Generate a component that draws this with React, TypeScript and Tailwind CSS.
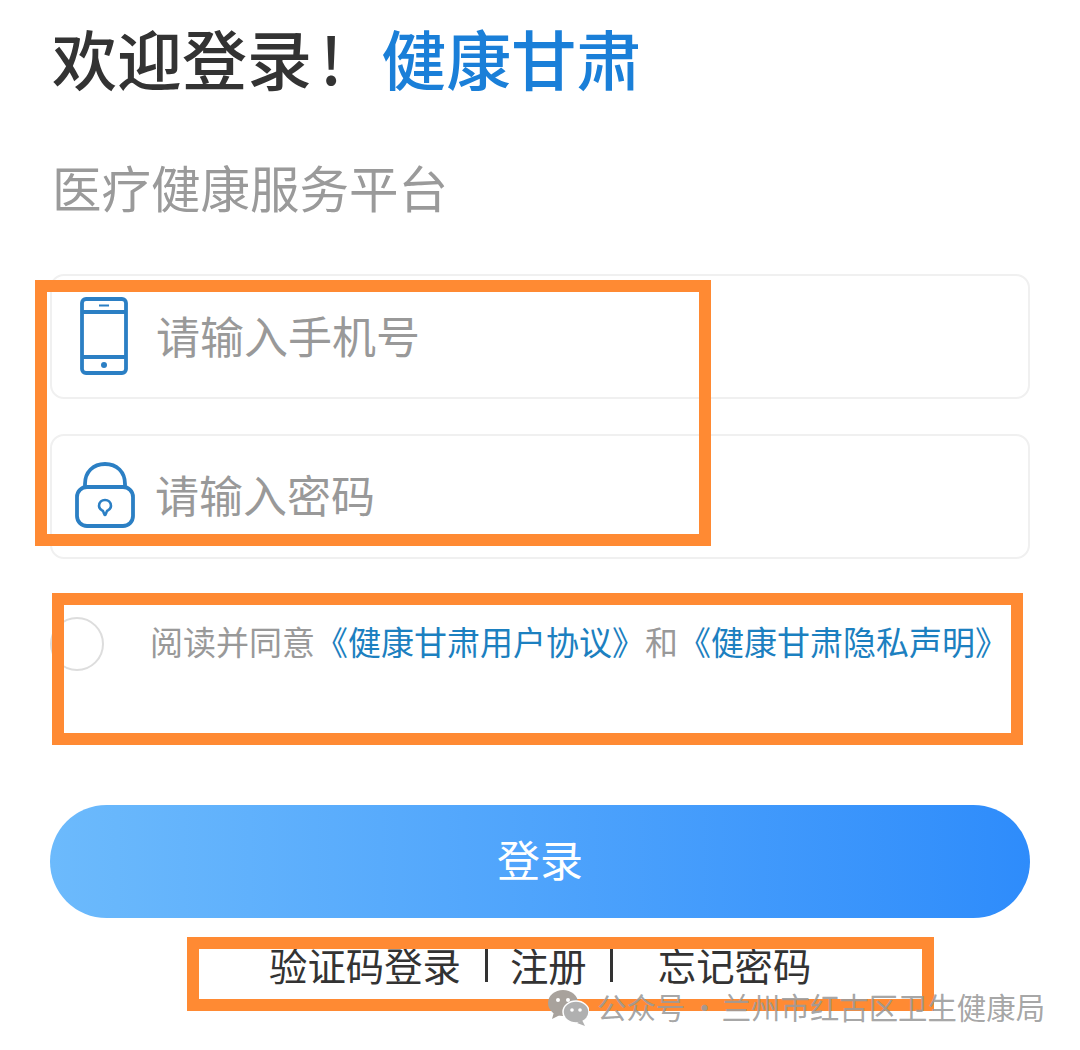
const cjk = "font-['Noto_Sans_CJK_SC','Noto_Sans',sans-serif]";

function PhoneIcon() {
  return (
    <svg width="50" height="80" viewBox="0 0 50 80" fill="none" stroke="#2b7fc4" strokeWidth="3.8" className="shrink-0">
      <rect x="2" y="2" width="44" height="74" rx="4" />
      <path d="M2 15h44M2 60h44" />
      <path d="M19 8.5h10" strokeWidth="2" />
      <circle cx="24" cy="68" r="3" fill="#2b7fc4" stroke="none" />
    </svg>
  );
}

function LockIcon() {
  return (
    <svg width="60" height="68" viewBox="0 0 60 68" fill="none" stroke="#2b7fc4" strokeWidth="3.8" className="shrink-0">
      <path d="M10 26V23C10 11 18 3 30 3s20 8 20 20v3" />
      <rect x="2" y="26" width="56" height="39" rx="10" />
      <path d="M30 54c-1 0-1-2-2-4-2-1-4-3-4-5 0-4 3-6 6-6s6 2 6 6c0 2-2 4-4 5-1 2-1 4-2 4z" strokeWidth="2.6" />
    </svg>
  );
}

function WechatIcon() {
  return (
    <svg width="42" height="36" viewBox="0 0 42 36" className="shrink-0">
      <ellipse cx="16" cy="13" rx="15" ry="13" fill="#a8a29c" />
      <path d="M7 22l-2 7 8-4z" fill="#a8a29c" />
      <ellipse cx="29" cy="22" rx="13" ry="11" fill="#b0b0b0" stroke="#fff" strokeWidth="1.5" />
      <path d="M35 30l3 6-8-3z" fill="#b0b0b0" />
      <circle cx="11" cy="10" r="2" fill="#fff" />
      <circle cx="21" cy="10" r="2" fill="#fff" />
      <circle cx="25" cy="20" r="1.8" fill="#fff" />
      <circle cx="33" cy="20" r="1.8" fill="#fff" />
    </svg>
  );
}

export default function App() {
  return (
    <div className={`relative h-[1050px] w-[1080px] overflow-hidden bg-white px-[50px] ${cjk}`}>
      <div className="flex h-[114px] items-center pl-[2px] text-[65px] font-medium leading-none">
        <span className="text-[#333333]">欢迎登录<span className="ml-[8px]">!</span></span>
        <span className="ml-[39px] text-[#1a7fd8]">健康甘肃</span>
      </div>
      <div className="mt-[48px] pl-[2px] text-[49.5px] leading-[50px] text-[#9a9a9a]">医疗健康服务平台</div>

      <div className="mt-[62px] flex h-[125px] items-center gap-[26px] rounded-[14px] border-2 border-[#f0f0f0] pl-[28px]">
        <PhoneIcon />
        <span className="mb-[4px] text-[44px] leading-none text-[#999999]">请输入手机号</span>
      </div>
      <div className="mt-[35px] flex h-[125px] items-end rounded-[14px] border-2 border-[#f0f0f0] pb-[28px] pl-[23px]">
        <LockIcon />
        <span className="mb-[13px] ml-[20px] text-[44px] leading-none text-[#999999]">请输入密码</span>
      </div>

      <div className="mt-[58px] flex h-[54px] items-center">
        <div className="h-[54px] w-[54px] shrink-0 rounded-full border-2 border-[#dddddd]" />
        <div className="mb-[6px] ml-[46px] whitespace-nowrap text-[33px] leading-none">
          <span className="text-[#999999]">阅读并同意</span>
          <span className="text-[#1c80c0]">《健康甘肃用户协议》</span>
          <span className="text-[#999999]">和</span>
          <span className="text-[#1c80c0]">《健康甘肃隐私声明》</span>
        </div>
      </div>

      <button className="mt-[134px] flex h-[113px] w-full items-center justify-center rounded-full bg-gradient-to-r from-[#6cbafc] to-[#2e8cfb] pb-[6px] text-[43px] text-white">
        登录
      </button>

      <div className="mt-[24px] flex h-[44px] items-center pl-[219px] text-[38.4px] leading-none text-[#333333]">
        <span>验证码登录</span>
        <span className="ml-[24px] h-[36px] w-[3px] bg-[#333333]" />
        <span className="ml-[22px]">注册</span>
        <span className="ml-[23px] h-[36px] w-[3px] bg-[#333333]" />
        <span className="ml-[45px]">忘记密码</span>
      </div>

      {/* annotation boxes drawn over the screenshot */}
      <div className="absolute left-[35px] top-[280px] h-[266px] w-[676px] border-[12px] border-[#ff8a33]" />
      <div className="absolute left-[52px] top-[593px] h-[152px] w-[971px] border-[12px] border-[#ff8a33]" />
      <div className="absolute left-[187px] top-[937px] h-[74px] w-[747px] border-[12px] border-[#ff8a33]" />

      <div className="absolute left-[547px] top-[990px] flex items-center gap-[8px] text-[29.4px] leading-none text-[#9b9b9b]/90">
        <WechatIcon />
        <span className="mb-[2px] whitespace-nowrap">公众号<span className="tracking-[-2px]"> · </span>兰州市红古区卫生健康局</span>
      </div>
    </div>
  );
}
